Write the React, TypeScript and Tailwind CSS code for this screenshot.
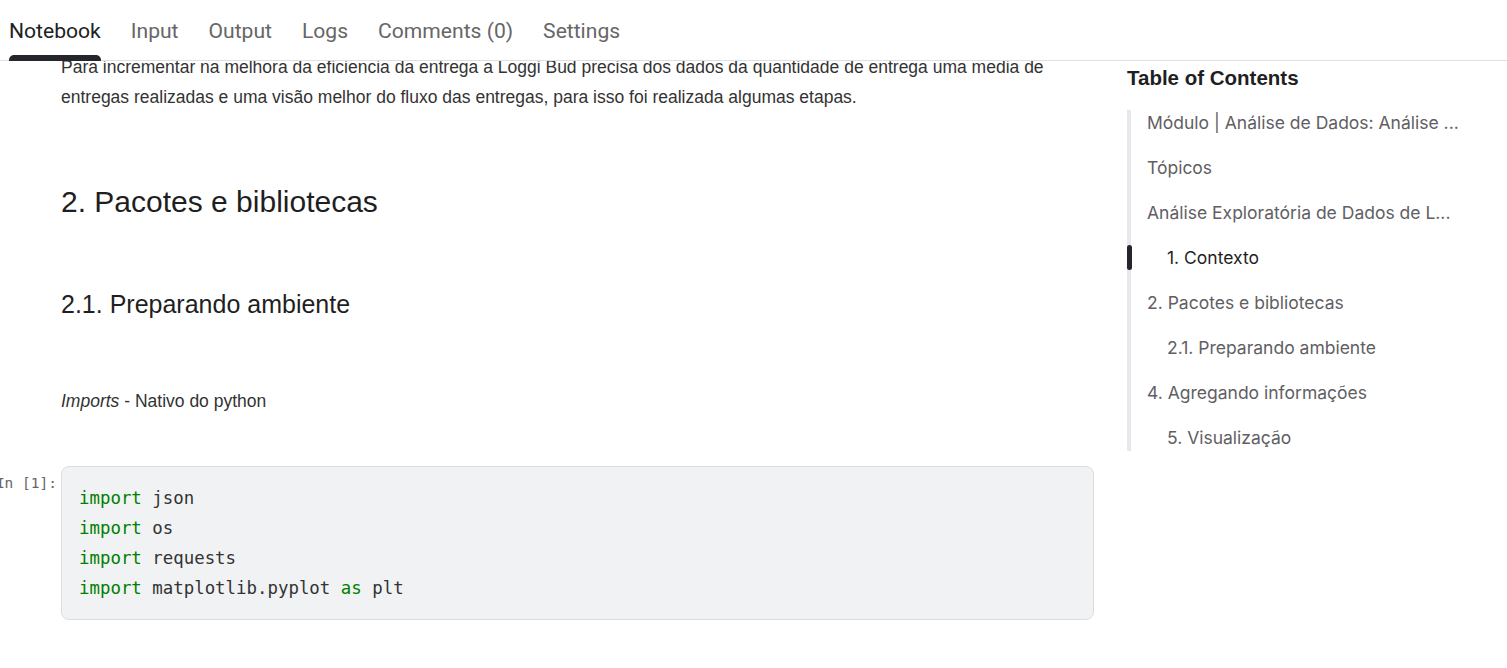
import React from "react";

const tabs = ["Notebook", "Input", "Output", "Logs", "Comments (0)", "Settings"];

const toc = [
    { label: "Módulo | Análise de Dados: Análise ...", level: 0 },
    { label: "Tópicos", level: 0 },
    { label: "Análise Exploratória de Dados de L...", level: 0 },
    { label: "1. Contexto", level: 1, active: true },
    { label: "2. Pacotes e bibliotecas", level: 0 },
    { label: "2.1. Preparando ambiente", level: 1 },
    { label: "4. Agregando informações", level: 0 },
    { label: "5. Visualização", level: 1 },
];

const code = [
    [["import", true], [" json", false]],
    [["import", true], [" os", false]],
    [["import", true], [" requests", false]],
    [["import", true], [" matplotlib.pyplot ", false], ["as", true], [" plt", false]],
] as [string, boolean][][];

function App() {
    return (
        <div className="h-[668px] w-full flex flex-col overflow-hidden bg-white">
            {/* tab bar */}
            <div className="h-[61px] shrink-0 border-b border-[#dedfe3] flex items-stretch gap-[30px] pl-[9px] font-['Roboto',sans-serif] text-[21.1px]">
                {tabs.map((t, i) => (
                    <div key={t} className="relative flex items-center pt-[2px]">
                        <span className={i === 0 ? "text-[#202124]" : "text-[#666]"}>{t}</span>
                        {i === 0 && (
                            <div className="absolute left-0 right-0 bottom-[-1px] h-[6px] rounded-t-[5px] bg-[#24262b]" />
                        )}
                    </div>
                ))}
            </div>

            <div className="flex flex-1 min-h-0">
                {/* notebook content */}
                <div className="w-[1110px] shrink-0 overflow-hidden pl-[61px] pr-[16px] font-['Liberation_Sans',Arial,sans-serif]">
                    <p className="mt-[-9px] text-[17.5px] leading-[30px] text-[#333]">
                        Para incrementar na melhora da eficiencia da entrega a Loggi Bud precisa dos dados da quantidade de entrega
                        uma media de entregas realizadas e uma visão melhor do fluxo das entregas, para isso foi realizada algumas
                        etapas.
                    </p>
                    <h2 className="mt-[73px] text-[30px] leading-[34px] text-[#1f1f1f]">2. Pacotes e bibliotecas</h2>
                    <h3 className="mt-[71px] text-[25px] leading-[28px] text-[#1f1f1f]">2.1. Preparando ambiente</h3>
                    <p className="mt-[71px] text-[17.5px] leading-[24px] text-[#333]">
                        <em>Imports</em> - Nativo do python
                    </p>

                    {/* code cell */}
                    <div className="mt-[53px] ml-[-61px] flex">
                        <div className="w-[61px] shrink-0 flex justify-end pr-[4px] pt-[7px]">
                            <span className="whitespace-nowrap font-['DejaVu_Sans_Mono',monospace] text-[14.5px] text-[#666]">
                                In [1]:
                            </span>
                        </div>
                        <div className="flex-1 rounded-[8px] border border-[#dcdde1] bg-[#f1f2f4] px-[17px] py-[16px]">
                            <pre className="font-['DejaVu_Sans_Mono',monospace] text-[17.4px] leading-[30px] text-[#333]">
                                {code.map((line, i) => (
                                    <div key={i}>
                                        {line.map(([txt, kw], j) => (
                                            <span key={j} className={kw ? "text-[#008000]" : ""}>
                                                {txt}
                                            </span>
                                        ))}
                                    </div>
                                ))}
                            </pre>
                        </div>
                    </div>
                </div>

                {/* table of contents */}
                <div className="flex-1 pl-[17px] pt-[5px]">
                    <h4 className="font-['Liberation_Sans',Arial,sans-serif] font-bold text-[20.5px] leading-[24px] text-[#1f1f1f]">
                        Table of Contents
                    </h4>
                    <div className="mt-[20px] border-l-[4px] border-[#e8e8ec] flex flex-col gap-[19px] font-['Inter',sans-serif] text-[17.5px] leading-[26px]">
                        {toc.map((item) => (
                            <div
                                key={item.label}
                                className={
                                    "relative whitespace-nowrap " +
                                    (item.level ? "pl-[36px] " : "pl-[16px] ") +
                                    (item.active ? "text-[#1f1f1f]" : "text-[#5f6064]")
                                }
                            >
                                {item.active && (
                                    <div className="absolute left-[-4px] top-[0px] h-[25px] w-[5px] rounded-[3px] bg-[#24262b]" />
                                )}
                                {item.label}
                            </div>
                        ))}
                    </div>
                </div>
            </div>
        </div>
    );
}

export default App;
